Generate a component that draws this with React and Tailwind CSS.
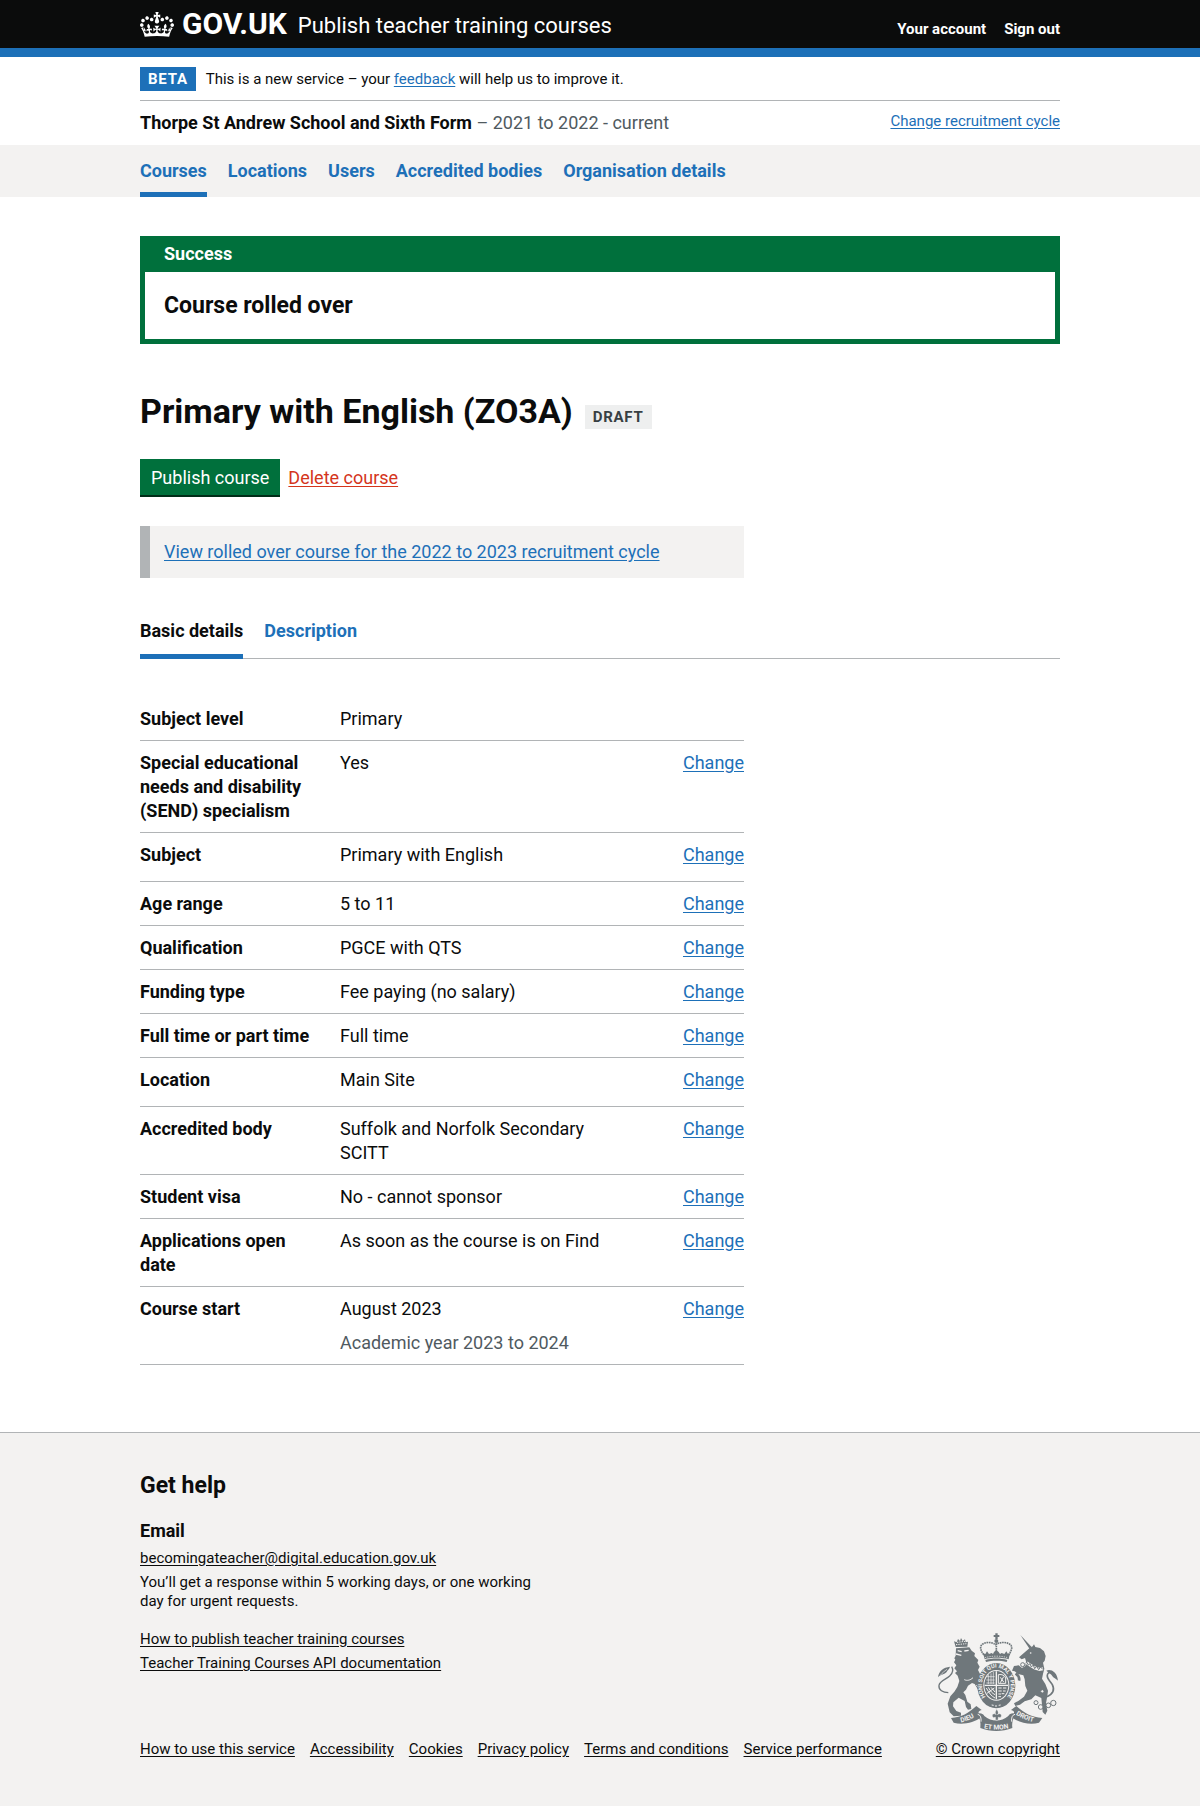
import React from "react";

const NAV = ["Courses", "Locations", "Users", "Accredited bodies", "Organisation details"];

const ROWS = [
  { label: "Subject level", value: "Primary", fixed: true },
  { label: "Special educational needs and disability (SEND) specialism", value: "Yes" },
  { label: "Subject", value: "Primary with English", list: true },
  { label: "Age range", value: "5 to 11" },
  { label: "Qualification", value: "PGCE with QTS" },
  { label: "Funding type", value: "Fee paying (no salary)" },
  { label: "Full time or part time", value: "Full time" },
  { label: "Location", value: "Main Site", list: true },
  { label: "Accredited body", value: "Suffolk and Norfolk Secondary SCITT" },
  { label: "Student visa", value: "No - cannot sponsor" },
  { label: "Applications open date", value: "As soon as the course is on Find" },
  { label: "Course start", value: "August 2023", hint: "Academic year 2023 to 2024" },
];

const FOOTER_LINKS = [
  "How to use this service",
  "Accessibility",
  "Cookies",
  "Privacy policy",
  "Terms and conditions",
  "Service performance",
];

function Container({ className = "", children }) {
  return <div className={`mx-auto w-full max-w-[968px] px-6 ${className}`}>{children}</div>;
}

function Link({ className = "text-[#1d70b8]", children, ...rest }) {
  return (
    <a href="#" className={`underline underline-offset-2 ${className}`} {...rest}>
      {children}
    </a>
  );
}

function CrownLogo() {
  return (
    <svg viewBox="0 0 132 97" className="h-[25px] w-[34px] shrink-0" fill="currentColor" aria-hidden="true">
      <path
        fillRule="evenodd"
        d="M25 30.2c3.5 1.5 7.7-.2 9.1-3.7 1.5-3.6-.2-7.8-3.9-9.2-3.6-1.4-7.6.3-9.1 3.9-1.4 3.5.3 7.5 3.9 9zM9 39.5c3.6 1.5 7.8-.2 9.2-3.7 1.5-3.6-.2-7.8-3.9-9.1-3.6-1.5-7.6.2-9.1 3.8-1.4 3.5.3 7.5 3.8 9zM4.4 57.2c3.5 1.5 7.7-.2 9.1-3.8 1.5-3.6-.2-7.7-3.9-9.1-3.5-1.5-7.6.3-9.1 3.8-1.4 3.5.3 7.6 3.9 9.1zm38.3-21.4c3.5 1.5 7.7-.2 9.1-3.8 1.5-3.6-.2-7.7-3.9-9.1-3.6-1.5-7.6.3-9.1 3.8-1.3 3.6.4 7.7 3.9 9.1zm64.4-5.6c-3.6 1.5-7.8-.2-9.1-3.7-1.5-3.6.2-7.8 3.8-9.2 3.6-1.4 7.7.3 9.2 3.9 1.3 3.5-.4 7.5-3.9 9zm15.9 9.3c-3.6 1.5-7.7-.2-9.1-3.7-1.5-3.6.2-7.8 3.7-9.1 3.6-1.5 7.7.2 9.2 3.8 1.5 3.5-.3 7.5-3.8 9zm4.7 17.7c-3.6 1.5-7.8-.2-9.2-3.8-1.5-3.6.2-7.7 3.9-9.1 3.6-1.5 7.7.3 9.2 3.8 1.3 3.5-.4 7.6-3.9 9.1zM89.3 35.8c-3.6 1.5-7.8-.2-9.2-3.8-1.4-3.6.2-7.7 3.9-9.1 3.6-1.5 7.7.3 9.2 3.8 1.4 3.6-.3 7.7-3.9 9.1zM69.7 17.7l8.9 4.7V9.3l-8.9 2.8c-.2-.3-.5-.6-.9-.9L72.4 0H59.6l3.5 11.2c-.3.3-.6.5-.9.9l-8.8-2.8v13.1l8.8-4.7c.3.3.6.7.9.9l-5 15.4v.1c-.2.8-.4 1.6-.4 2.4 0 4.1 3.1 7.5 7 8.1h.2c.3 0 .7.1 1 .1.4 0 .7 0 1-.1h.2c4-.6 7.1-4.1 7.1-8.1 0-.8-.1-1.7-.4-2.4V34l-5.1-15.4c.4-.2.7-.6 1-.9zM66 92.8c16.9 0 32.8 1.1 47.1 3.2 4-16.9 8.9-26.7 14-33.5l-9.6-3.4c1 4.9 1.1 7.2 0 10.2-1.5-1.4-3-4.3-4.2-8.7L108.6 76c2.8-2 5-3.2 7.5-3.3-4.4 9.4-10 11.9-13.6 11.2-4.3-.8-6.3-4.6-5.6-7.9 1-4.7 5.7-5.9 8-.5 4.3-8.7-3-11.4-7.6-8.8 7.1-7.2 7.9-13.5 2.1-21.1-8 6.1-8.1 12.3-4.5 20.8-4.7-5.4-12.1-2.5-9.5 6.2 3.4-5.2 7.9-2 7.2 3.1-.6 4.3-6.4 7.8-13.5 7.2-10.3-.9-10.9-8-11.2-13.8 2.5-.5 7.1 1.8 11 7.3L80.2 60c-4.1 4.4-8 5.3-12.3 5.4 1.4-4.4 8-11.6 8-11.6H55.5s6.4 7.2 7.9 11.6c-4.2-.1-8-1-12.3-5.4l1.4 16.4c3.9-5.5 8.5-7.7 10.9-7.3-.3 5.8-.9 12.8-11.1 13.8-7.2.6-12.9-2.9-13.5-7.2-.7-5 3.8-8.3 7.1-3.1 2.7-8.7-4.6-11.6-9.4-6.2 3.7-8.5 3.6-14.7-4.6-20.8-5.8 7.6-5 13.9 2.2 21.1-4.7-2.6-11.9.1-7.7 8.8 2.3-5.5 7.1-4.2 8.1.5.7 3.3-1.3 7.1-5.7 7.9-3.5.7-9-1.8-13.5-11.2 2.5.1 4.7 1.3 7.5 3.3l-4.7-15.4c-1.2 4.4-2.7 7.2-4.3 8.7-1.1-3-.9-5.3 0-10.2l-9.5 3.4c5 6.9 9.9 16.7 14 33.5 14.8-2.1 30.8-3.2 47.7-3.2z"
      />
    </svg>
  );
}

function RoyalArms() {
  const ink = "#6f777b";
  const paper = "#f3f2f1";
  return (
    <svg viewBox="108 62 366 300" className="h-[100px] w-[122px]" fill={ink} aria-hidden="true">
      {/* lion */}
      <path d="M164 107l-5-17 8 3 4-10 6 6 3-9 5 9 7-5 2 9 7-2-2 15z" />
      <path d="M165 100l31-3M168 93l24-3" stroke={paper} strokeWidth="3" strokeDasharray="4 3" />
      <path d="M165 111l40-3 7 10 10 8-2 8 12 12-3 8 7 12-5 10 8 16-5 10 9 14 4 14-2 14-12-6-12-20-8-3-12 8-6 12-8 8 6 8 6 20 10 8 2 14-10 2-6-8-4-18-18-10-16 14-1 12 10 14 14 5 0 9-22 2-12-12-6-26 8-22 12-14 9-14 6-18-5-16-8-8 6-5-8-9 6-9-7-9 4-8-3-4 4-8z" />
      <path d="M170 118l12 3M190 119l13-2M165 128l16 4" stroke={paper} strokeWidth="4" fill="none" />
      <path d="M190 205c8 4 18 2 26-6M226 222l16 12" stroke={paper} strokeWidth="3" fill="none" />
      <path d="M142 244c-16 0-30-8-28-22s22-18 32-28c9-8 12-18 6-28" stroke={ink} strokeWidth="4" fill="none" />
      <path d="M111 198c2-18 16-30 36-32-2 8-8 10-10 16-6 8-18 6-26 16z" />
      <path d="M118 192c6-8 12-12 20-18" stroke={paper} strokeWidth="2" fill="none" />

      {/* unicorn */}
      <path d="M358 71l34 36-6 6z" />
      <path d="M386 110l9-5 4-6 4 8 14 3 12 10 5 14-3 14-5 6 4 18-4 16-3 14 10 16 8 20-2 16-4 22 4 22-6 12-8-8-2-22-2-20-18-8-12 12-20 6-14 10-14 4-4-8 14-8 16-12 10-18-6-14-2-20-4-12-16-4-10-8-8-2 6-14 14-2 10 8 10-6 2-14-3-10-10 4-8-6z" />
      <circle cx="389" cy="125" r="2.5" fill={paper} />
      <path d="M377 154l13 9 12 7 14 4 10-2" stroke={paper} strokeWidth="9" fill="none" />
      <path d="M378 153l4 8 5-4 4 10 6-6 4 11 6-7 6 10 5-8 7 6" stroke={ink} strokeWidth="3" fill="none" />
      <path d="M344 186c8 6 12 14 10 22" stroke={ink} strokeWidth="8" fill="none" />
      <path d="M438 256c18-8 24-20 16-36-8-14-20-20-14-32 4-8 14-6 24 4" stroke={ink} strokeWidth="5" fill="none" />
      <path d="M436 178c12-6 32 2 35 30-8-8-14-8-20-18z" />
      <g stroke={ink} strokeWidth="3" fill={paper}>
        <circle cx="405" cy="274" r="6" />
        <circle cx="419" cy="287" r="7" />
        <circle cx="424" cy="240" r="5" />
        <circle cx="442" cy="282" r="7" />
        <circle cx="457" cy="275" r="8" />
        <circle cx="365" cy="160" r="6" />
      </g>

      {/* crown */}
      <path d="M283 66h7v5h5v6h-5v6h-7v-6h-5v-6h5z" />
      <circle cx="286" cy="89" r="6" />
      <path d="M253 136c-10-12-18-24-12-34 8-10 30-12 43-2 14-10 38-8 46 2 6 10-2 22-12 34" fill="none" stroke={ink} strokeWidth="5" strokeDasharray="5 2" />
      <path d="M286 96v34" stroke={ink} strokeWidth="5" strokeDasharray="5 2" />
      <path d="M249 134l-4-8 8 2 5-8 6 8 8-3 4 3 3-6 7-6 7 6 4 6 5-3 8 3 6-8 5 8 8-2-4 8-2 10c-20-6-52-6-72 0z" />
      <path d="M252 139c20-6 48-6 68 0" fill="none" stroke={paper} strokeWidth="2" strokeDasharray="4 3" />
      <path d="M253 146c20-6 46-6 66 0l-2 6c-18-5-44-5-62 0z" />

      {/* garter and shield */}
      <ellipse cx="286" cy="223" rx="57" ry="68" />
      <ellipse cx="286" cy="222" rx="39" ry="46" fill={paper} />
      <ellipse cx="286" cy="222" rx="36" ry="43" />
      <g fill="none" stroke={paper} strokeWidth="3">
        <path d="M286 180v84M251 222h70" strokeWidth="4" />
        <path d="M258 196h23M256 206h25M256 215h25M262 190v28M270 186v32M277 182v36" strokeWidth="2" />
        <path d="M292 190c12-2 18 2 22 10v16h-22zM298 198l10 14M308 196l-10 18" />
        <path d="M256 230c8 14 14 24 26 30M262 228c6 12 12 18 20 22M270 228l12 14M258 246l22-16" />
        <path d="M292 230h10M306 230h10M292 239h10M306 239h8M292 248h8M302 247h8M292 256h8" />
      </g>
      <path id="garter-line" d="M258 262A43 53 0 1 1 314 262" fill="none" />
      <g className="fill-[#f3f2f1] font-['Roboto',sans-serif] font-bold">
        <text fontSize="17">
          <textPath href="#garter-line" startOffset="50%" textAnchor="middle">HONI SOIT QUI MAL Y PENSE</textPath>
        </text>
      </g>
      <path d="M272 281l6 1M282 284l6 0M293 282l6-1" stroke={paper} strokeWidth="3" />

      {/* motto ribbon */}
      <path d="M150 320c32-2 52-14 76-36l16 12c-14 4-10 10-2 22-20 16-56 24-82 16z" />
      <path d="M424 320c-32-2-54-14-78-36l-16 12c14 4 10 10 2 22 20 16 56 24 82 16z" />
      <path d="M228 308c8-4 18-2 22 6 22 18 50 18 72 0 4-8 14-10 24-6-8 8-14 22-12 42-30 12-66 12-96 0 2-18-2-32-10-42z" />
      <path d="M230 309c9 2 11 10 10 22M342 309c-9 2-11 10-10 22" fill="none" stroke={paper} strokeWidth="3" />
      <path d="M287 294c6 8 6 12 2 17 4-6 12-4 12 2 0 5-5 7-9 4l-1 9h-7l-1-9c-4 3-9 1-9-4 0-6 8-8 12-2-4-5-4-9 1-17z" stroke={paper} strokeWidth="1" />
      <path id="ribbon-left" d="M166 335c24-2 44-10 66-26" fill="none" />
      <path id="ribbon-mid" d="M240 349c28 7 64 7 92 0" fill="none" />
      <path id="ribbon-right" d="M338 305c20 14 40 24 66 28" fill="none" />
      <g fontSize="20" className="fill-[#f3f2f1] font-['Roboto',sans-serif] font-bold" textAnchor="middle">
        <text><textPath href="#ribbon-left" startOffset="50%">DIEU</textPath></text>
        <text><textPath href="#ribbon-mid" startOffset="50%">ET MON</textPath></text>
        <text><textPath href="#ribbon-right" startOffset="50%">DROIT</textPath></text>
      </g>
    </svg>
  );
}

function Header() {
  return (
    <header className="bg-[#0b0c0c] text-white">
      <Container className="flex h-12 items-center justify-between gap-6">
        <div className="flex items-center gap-[11px]">
          <a href="#" className="flex items-center gap-2 text-[30px]/[30px] font-bold">
            <CrownLogo />
            <span>GOV.UK</span>
          </a>
          <a href="#" className="pt-1 text-[22px]/6">
            Publish teacher training courses
          </a>
        </div>
        <nav aria-label="Account" className="flex gap-[18px] pt-[10px] text-[15px]/5 font-bold">
          <a href="#">Your account</a>
          <a href="#">Sign out</a>
        </nav>
      </Container>
      <div className="h-[9px] bg-[#1d70b8]" />
    </header>
  );
}

function Summary() {
  return (
    <dl className="mt-[38px]">
      {ROWS.map((row) => (
        <div
          key={row.label}
          className={`flex border-b border-[#b1b4b6] pt-[10px] ${row.list ? "pb-[14px]" : "pb-[9px]"}`}
        >
          <dt className="w-[200px] shrink-0 pr-[19px] font-bold">{row.label}</dt>
          <dd className="flex-1 pr-[19px]">
            {row.value}
            {row.hint && <p className="mt-[10px] text-[#505a5f]">{row.hint}</p>}
          </dd>
          <dd className="w-[102px] shrink-0 text-right">
            {!row.fixed && <Link aria-label={`Change ${row.label.toLowerCase()}`}>Change</Link>}
          </dd>
        </div>
      ))}
    </dl>
  );
}

function Footer() {
  const dark = "text-[#0b0c0c]";
  return (
    <footer className="mt-[67px] border-t border-[#b1b4b6] bg-[#f3f2f1] pt-[38px] pb-12 text-[15px]/[19px]">
      <Container>
        <h2 className="text-[23px]/[29px] font-bold">Get help</h2>
        <h3 className="mt-[19px] text-lg/6 font-bold">Email</h3>
        <ul className="mt-[6px] flex max-w-[400px] flex-col gap-[5px]">
          <li><Link className={dark}>becomingateacher@digital.education.gov.uk</Link></li>
          <li>You’ll get a response within 5 working days, or one working day for urgent requests.</li>
        </ul>
        <div className="mt-[19px] flex flex-wrap items-end justify-between gap-x-6">
          <div>
            <ul className="flex flex-col gap-[5px]">
              <li><Link className={dark}>How to publish teacher training courses</Link></li>
              <li><Link className={dark}>Teacher Training Courses API documentation</Link></li>
            </ul>
            <ul className="mt-[67px] flex flex-wrap gap-x-[15px]">
              {FOOTER_LINKS.map((text) => (
                <li key={text}><Link className={dark}>{text}</Link></li>
              ))}
            </ul>
          </div>
          <a href="#" className="flex flex-col items-center gap-2 underline underline-offset-2">
            <RoyalArms />
            <span>© Crown copyright</span>
          </a>
        </div>
      </Container>
    </footer>
  );
}

export default function App() {
  return (
    <div className="bg-white font-['Roboto',sans-serif] text-lg/6 text-[#0b0c0c]">
      <Header />

      <Container>
        <div className="flex items-center gap-[10px] border-b border-[#b1b4b6] pt-[10px] pb-[9px] text-[15px]/[19px]">
          <strong className="bg-[#1d70b8] px-2 py-[2px] text-[15px]/5 font-bold tracking-wider text-white">BETA</strong>
          <p>
            This is a new service – your <Link>feedback</Link> will help us to improve it.
          </p>
        </div>
        <div className="flex h-[44px] items-center justify-between gap-6">
          <p>
            <strong>Thorpe St Andrew School and Sixth Form</strong>
            <span className="text-[#505a5f]"> – 2021 to 2022 - current</span>
          </p>
          <p className="pb-1 text-[15px]/[19px]"><Link>Change recruitment cycle</Link></p>
        </div>
      </Container>

      <nav aria-label="Organisation" className="bg-[#f3f2f1]">
        <Container>
          <ul className="flex flex-wrap gap-x-[21px] font-bold text-[#1d70b8]">
            {NAV.map((text, i) => (
              <li key={text}>
                <a
                  href="#"
                  className={`block border-b-5 pt-[14px] pb-[9px] ${i === 0 ? "border-[#1d70b8]" : "border-transparent"}`}
                >
                  {text}
                </a>
              </li>
            ))}
          </ul>
        </Container>
      </nav>

      <main>
        <Container>
          <section aria-labelledby="banner-title" className="mt-[39px] border-5 border-t-0 border-[#00703c]">
            <h2 id="banner-title" className="bg-[#00703c] px-[19px] pt-[6px] pb-[6px] font-bold text-white">
              Success
            </h2>
            <p className="px-[19px] py-[19px] text-[23px]/[29px] font-bold">Course rolled over</p>
          </section>

          <div className="mt-[47px] flex flex-wrap items-end gap-3">
            <h1 className="text-[34px]/[40px] font-bold">Primary with English (ZO3A)</h1>
            <strong className="mb-[2px] bg-[#eeefef] px-2 py-[2px] text-[15px]/5 font-bold tracking-wider text-[#383f43]">
              DRAFT
            </strong>
          </div>

          <div className="mt-[28px] flex flex-wrap items-center gap-2">
            <button
              type="button"
              className="border-b-2 border-[#002d18] bg-[#00703c] px-[11px] pt-[7px] pb-[5px] text-white"
            >
              Publish course
            </button>
            <Link className="text-[#d4351c]">Delete course</Link>
          </div>

          <p className="mt-[29px] max-w-[604px] border-l-10 border-[#b1b4b6] bg-[#f3f2f1] px-[14px] py-[14px]">
            <Link>View rolled over course for the 2022 to 2023 recruitment cycle</Link>
          </p>

          <nav aria-label="Course" className="mt-[28px] flex gap-[21px] font-bold shadow-[inset_0_-1px_0_#b1b4b6]">
            <a href="#" aria-current="page" className="border-b-5 border-[#1d70b8] pt-[13px] pb-[11px]">
              Basic details
            </a>
            <a href="#" className="pt-[13px] pb-4 text-[#1d70b8]">Description</a>
          </nav>

          <div className="max-w-[604px]">
            <Summary />
          </div>
        </Container>
      </main>

      <Footer />
    </div>
  );
}
